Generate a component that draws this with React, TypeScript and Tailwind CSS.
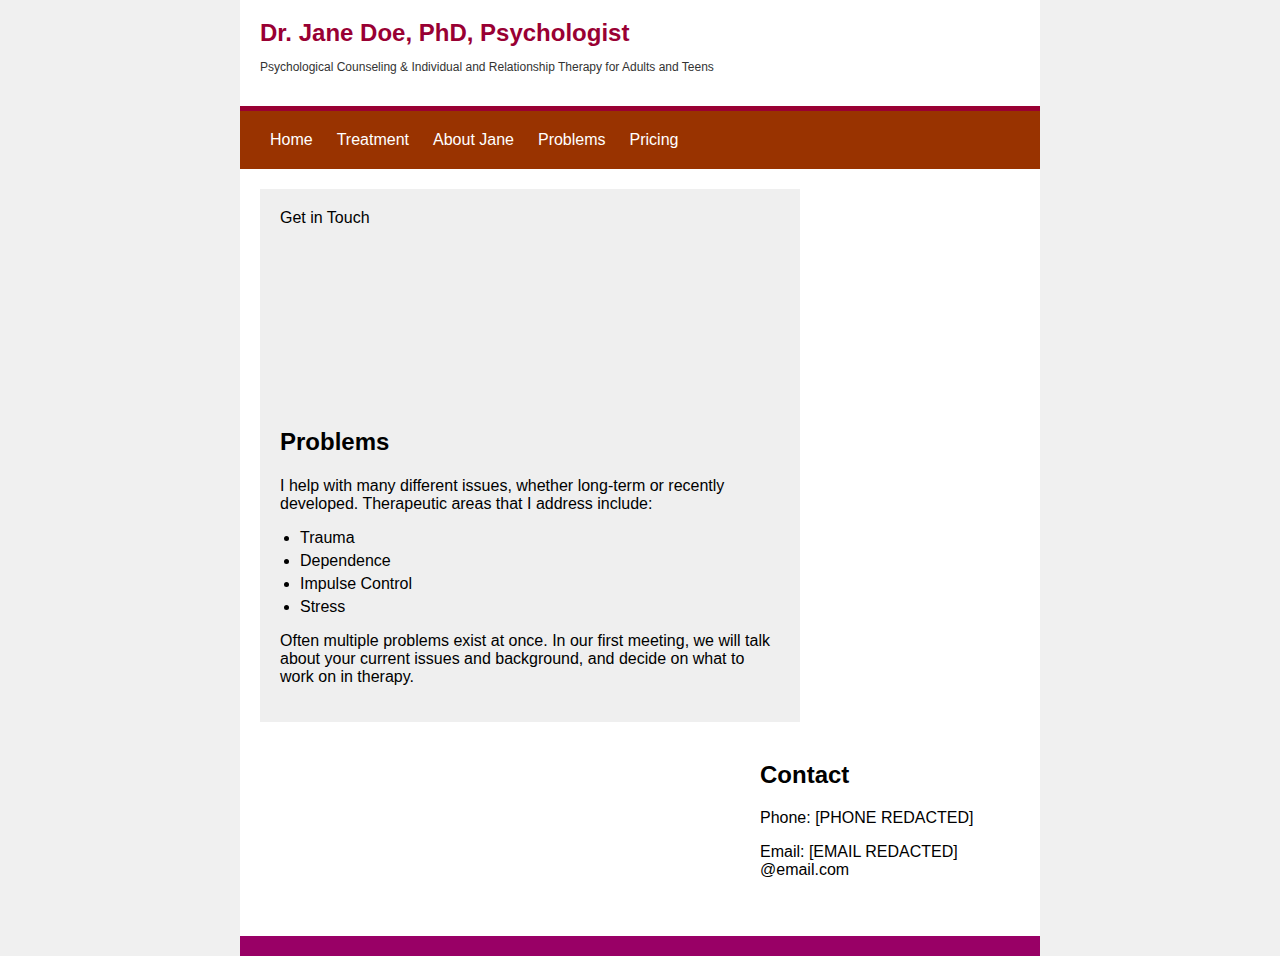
export default function App() {
  const nav = ["Home", "Treatment", "About Jane", "Problems", "Pricing"];
  const problems = ["Trauma", "Dependence", "Impulse Control", "Stress"];

  return (
    <div className="min-h-screen bg-[#f0f0f0] font-['Liberation_Sans',Arial,sans-serif] text-black">
      <div className="mx-auto w-[800px] bg-white">
        <header className="h-[106px] px-5 pt-5">
          <h1 className="text-[24px]/[26px] font-bold text-[#990033]">
            Dr. Jane Doe, PhD, Psychologist
          </h1>
          <p className="mt-[14px] text-[12px]/[14px] text-[#333333]">
            Psychological Counseling &amp; Individual and Relationship Therapy for Adults and Teens
          </p>
        </header>

        <nav className="h-[63px] border-t-[5px] border-[#990033] bg-[#993300]">
          <ul className="flex h-full items-center pl-[18px]">
            {nav.map((item) => (
              <li key={item} className="px-3 text-base/[18px] text-white">
                {item}
              </li>
            ))}
          </ul>
        </nav>

        <main className="px-5 pt-5 pb-[57px]">
          <section className="w-[540px] bg-[#efefef] px-5 pt-5 pb-5">
            <p className="text-base/[18px]">Get in Touch</p>
            <div className="h-[201px]" />
            <h2 className="text-2xl/[28px] font-bold">Problems</h2>
            <p className="mt-[21px] text-base/[18px]">
              I help with many different issues, whether long-term or recently developed. Therapeutic areas that I address include:
            </p>
            <ul className="mt-4 list-disc pl-5">
              {problems.map((p) => (
                <li key={p} className="mb-[5px] text-base/[18px] last:mb-0">
                  {p}
                </li>
              ))}
            </ul>
            <p className="mt-4 mb-4 text-base/[18px]">
              Often multiple problems exist at once. In our first meeting, we will talk about your current issues and background, and decide on what to work on in therapy.
            </p>
          </section>

          <div className="mt-[39px] flex justify-end">
            <aside className="w-[260px]">
              <h2 className="text-2xl/[28px] font-bold">Contact</h2>
              <p className="mt-5 text-base/[18px]">Phone: [PHONE REDACTED]</p>
              <p className="mt-4 text-base/[18px]">
                Email: [EMAIL REDACTED]
                <br />
                @email.com
              </p>
            </aside>
          </div>
        </main>

        <footer className="h-5 bg-[#990066]" />
      </div>
    </div>
  );
}
